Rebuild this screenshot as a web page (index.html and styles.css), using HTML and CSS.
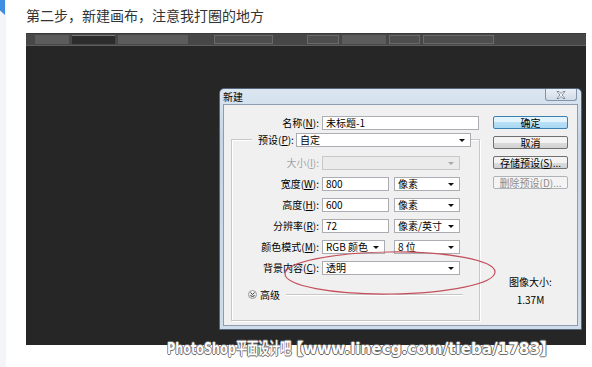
FILE: index.html
```html
<!DOCTYPE html>
<html lang="zh-CN">
<head>
  <meta charset="UTF-8">
  <title>第二步，新建画布</title>
  <link rel="stylesheet" href="styles.css">
</head>
<body>
<div class="page">
  <div class="edge"></div>
  <div class="main">
    <p class="caption">第二步，新建画布，注意我打圈的地方</p>

    <div class="shot">
      <div class="optbar">
        <span class="seg" style="width:5px"></span>
        <span class="seg light" style="width:34px"></span>
        <span class="seg box" style="width:43px"></span>
        <span class="seg light" style="width:70px"></span>
        <span class="seg" style="width:20px"></span>
        <span class="seg outline" style="width:57px"></span>
        <span class="seg" style="width:28px"></span>
        <span class="seg outline" style="width:30px"></span>
        <span class="seg light" style="width:44px"></span>
        <span class="seg outline" style="width:29px"></span>
        <span class="seg outline" style="width:69px"></span>
      </div>

      <div class="desk">
        <div class="dialog">
          <div class="titlebar">
            <span class="title">新建</span>
            <span class="close">
              <svg width="10" height="8" viewBox="0 0 10 8"><path d="M1 0.5h2l2 2 2-2h2l-3 3.5 3 3.5h-2l-2-2-2 2h-2l3-3.5z" fill="#fff" stroke="#6a7686" stroke-width="0.8"/></svg>
            </span>
          </div>

          <div class="client">
            <div class="form">
              <div class="row name-row">
                <label class="lbl">名称(<u>N</u>):</label>
                <span class="field w-name">未标题-1</span>
              </div>

              <div class="group">
                <div class="group-head">
                  <label>预设(<u>P</u>):</label>
                  <span class="field select w-preset">自定</span>
                </div>
                <div class="rows">
                  <div class="row">
                    <label class="lbl off">大小(<u>I</u>):</label>
                    <span class="field select off w-long"></span>
                  </div>
                  <div class="row">
                    <label class="lbl">宽度(<u>W</u>):</label>
                    <span class="field w-num">800</span>
                    <span class="field select w-unit">像素</span>
                  </div>
                  <div class="row">
                    <label class="lbl">高度(<u>H</u>):</label>
                    <span class="field w-num">600</span>
                    <span class="field select w-unit">像素</span>
                  </div>
                  <div class="row">
                    <label class="lbl">分辨率(<u>R</u>):</label>
                    <span class="field w-num">72</span>
                    <span class="field select w-unit">像素/英寸</span>
                  </div>
                  <div class="row">
                    <label class="lbl">颜色模式(<u>M</u>):</label>
                    <span class="field select w-mode">RGB 颜色</span>
                    <span class="field select w-unit">8 位</span>
                  </div>
                  <div class="row">
                    <label class="lbl">背景内容(<u>C</u>):</label>
                    <span class="field select w-long">透明</span>
                  </div>
                </div>
                <div class="adv">
                  <span class="adv-btn">
                    <svg width="5" height="6" viewBox="0 0 5 6"><path d="M0.5 0.5l2 2 2-2M0.5 3l2 2 2-2" fill="none" stroke="#333" stroke-width="1"/></svg>
                  </span>
                  <span>高级</span>
                  <span class="adv-line"></span>
                </div>
              </div>
            </div>

            <div class="side">
              <span class="btn primary">确定</span>
              <span class="btn">取消</span>
              <span class="btn">存储预设(<u>S</u>)...</span>
              <span class="btn off">删除预设(<u>D</u>)...</span>
              <div class="size-info">
                <div>图像大小:</div>
                <div class="size-val">1.37M</div>
              </div>
            </div>
          </div>
        </div>
      </div>

      <svg class="ring" width="220" height="50" viewBox="0 0 220 50">
        <ellipse cx="110" cy="24" rx="105" ry="21" fill="none" stroke="#c4505c" stroke-width="1.2" transform="rotate(-0.6 110 24)"/>
      </svg>
    </div>
  </div>

  <div class="watermark"><span class="wm-a">PhotoShop平面设计吧</span><span class="wm-b">【www.linecg.com/tieba/1783】</span></div>
</div>
</body>
</html>
```

FILE: styles.css
```css
body {
  margin: 0;
  background: #fff;
  font-family: "Noto Sans CJK SC", "Noto Sans", sans-serif;
  color: #000;
}
.page {
  display: flex;
  height: 367px;
  overflow: hidden;
  position: relative;
}
.edge {
  width: 6px;
  background: #f3f5f9;
  position: relative;
}
.edge::before {
  content: "";
  position: absolute;
  left: 0;
  top: 0;
  width: 5px;
  height: 15px;
  background: #3f8ee3;
  clip-path: polygon(0 0, 100% 0, 100% 100%, 0 70%);
}
.main { padding-left: 20px; }
.caption {
  margin: 5px 0 8px;
  font-size: 14px;
  line-height: 20px;
  color: #333;
}

/* photoshop screenshot */
.shot {
  width: 560px;
  height: 312px;
  background: #262626;
  position: relative;
}
.optbar {
  height: 11px;
  background: #474747;
  border-top: 1px solid #3a3a3a;
  border-bottom: 1px solid #5e5e5e;
  display: flex;
  align-items: center;
  gap: 3px;
  padding-left: 1px;
}
.seg { height: 9px; }
.seg.light { background: #5c5c5c; }
.seg.box {
  background: #2c2c2c;
  border-top: 1px solid #7a7a7a;
  height: 8px;
}
.seg.outline {
  border: 1px solid #6a6a6a;
  height: 7px;
  background: #4e4e4e;
}
.desk { padding: 42px 0 0 193px; }

.dialog {
  width: 363px;
  height: 242px;
  box-sizing: border-box;
  border: 1px solid #55657a;
  border-radius: 5px 5px 0 0;
  background: linear-gradient(#dbe6f1, #c6d5e5 20%, #cfdcea);
  padding: 0 3px 3px;
  display: flex;
  flex-direction: column;
}
.titlebar {
  height: 15px;
  display: flex;
  justify-content: space-between;
  align-items: flex-start;
  font-size: 10px;
  line-height: 16px;
}
.close {
  width: 32px;
  height: 12px;
  margin-right: 1px;
  box-sizing: border-box;
  border: 1px solid #8494a8;
  border-top: none;
  border-radius: 0 0 3px 3px;
  background: linear-gradient(#e9eff5, #d2dce7);
  display: flex;
  align-items: center;
  justify-content: center;
}
.client {
  flex: 1;
  background: #f0f0f0;
  border: 1px solid #8e9cad;
  display: flex;
  font-size: 10px;
  line-height: 12px;
}

/* left form */
.form { width: 258px; }
.row {
  display: flex;
  align-items: center;
  height: 21px;
}
.name-row {
  height: 15px;
  margin-top: 10px;
}
.lbl {
  text-align: right;
  padding-right: 3px;
  white-space: nowrap;
  flex-shrink: 0;
}
.name-row .lbl { width: 95px; }
.rows .lbl { width: 87px; }
.lbl.off { color: #a3a3a3; }
u { text-decoration: underline; text-underline-offset: 1px; }

.field {
  display: block;
  flex-shrink: 0;
  height: 14px;
  box-sizing: border-box;
  border: 1px solid #abadb3;
  background: #fff;
  padding-left: 3px;
  line-height: 12px;
  white-space: nowrap;
  position: relative;
}
.select::after {
  content: "";
  position: absolute;
  right: 5px;
  top: 5px;
  border-left: 3px solid transparent;
  border-right: 3px solid transparent;
  border-top: 3px solid #111;
}
.field.off { background: #ebebeb; border-color: #c9c9c9; }
.field.off::after { border-top-color: #a8a8a8; }

.w-name { width: 157px; }
.w-preset { width: 175px; }
.w-long { width: 138px; }
.w-num { width: 67px; margin-right: 5px; }
.w-mode { width: 63px; margin-right: 9px; }
.w-unit { width: 66px; }

.group {
  margin: 9px 0 0 7px;
  width: 249px;
  height: 182px;
  box-sizing: border-box;
  border: 1px solid #c7c7c7;
  box-shadow: inset 1px 1px #fff, 1px 1px #fff;
}
.group-head {
  display: flex;
  align-items: center;
  gap: 2px;
  width: 215px;
  height: 15px;
  margin: -8px 0 0 20px;
  padding-left: 6px;
  box-sizing: border-box;
  background: #f0f0f0;
}
.group-head label {
  white-space: nowrap;
  flex-shrink: 0;
}
.rows { padding-top: 5px; }

.adv {
  display: flex;
  align-items: center;
  height: 15px;
  margin-top: 9px;
  padding-left: 16px;
  gap: 3px;
}
.adv-btn {
  width: 9px;
  height: 9px;
  box-sizing: border-box;
  border: 1px solid #9a9a9a;
  border-radius: 50%;
  background: linear-gradient(#fbfbfb, #dcdcdc);
  display: flex;
  align-items: center;
  justify-content: center;
}
.adv-line {
  width: 177px;
  margin-left: 3px;
  border-top: 1px solid #c7c7c7;
  border-bottom: 1px solid #fff;
}

/* right column */
.side {
  width: 75px;
  padding: 11px 0 0 11px;
  display: flex;
  flex-direction: column;
}
.btn {
  height: 13px;
  margin-bottom: 7px;
  box-sizing: border-box;
  border: 1px solid #707070;
  border-radius: 2px;
  background: linear-gradient(#f3f3f3 50%, #dcdcdc 50%, #d2d2d2);
  text-align: center;
  line-height: 11px;
  white-space: nowrap;
}
.btn.primary {
  border-color: #3c7fb1;
  background: linear-gradient(#e3f4fc 50%, #b9e1f7 50%, #a8d8f3);
}
.btn.off {
  border-color: #b0b4b8;
  background: #f4f4f4;
  color: #8d8d8d;
}
.size-info {
  margin-top: 80px;
  text-align: center;
}
.size-val { margin-top: 6px; }

/* circled area */
.ring {
  position: absolute;
  left: 254px;
  top: 216px;
}

/* watermark over the picture */
.watermark {
  position: absolute;
  left: 167px;
  top: 339px;
  width: 420px;
  white-space: nowrap;
  font-family: "DejaVu Sans", sans-serif;
  font-weight: bold;
  font-size: 16px;
  line-height: 20px;
  color: #fff;
  text-shadow: 1px 0 #6a6a6a, -1px 0 #6a6a6a, 0 1px #6a6a6a, 0 -1px #6a6a6a;
}
.wm-a, .wm-b {
  display: inline-block;
  vertical-align: top;
  transform-origin: left center;
}
.wm-a {
  width: 121px;
  transform: scaleX(0.7);
}
.wm-b { transform: scaleX(0.95); }
```
